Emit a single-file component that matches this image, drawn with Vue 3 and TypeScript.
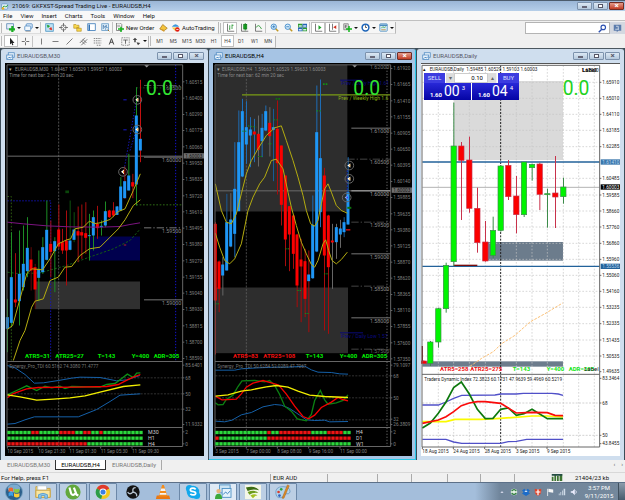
<script setup lang="ts">
type Candle = [x: number, high: number, low: number, top: number, bottom: number, body: string, wick: string]
type Curve = { pts: string; color: string; w?: number; dash?: string }
type Box = { x: number; y: number; w: number; h: number; fill: string }
type Note = { x: number; y: number; t: string; fill: string; size?: number; end?: boolean; bold?: boolean }
type Chart = {
  id: string
  title: string
  theme: 'dark' | 'light'
  active?: boolean
  view: string
  right: number
  split: number
  bodyWidth: number
  boxes: Box[]
  back: Curve[]
  candles: Candle[]
  front: Curve[]
  axis: [number, string][]
  tags: { y: number; t: string; bg: string; fg: string }[]
  notes: Note[]
  dates: [number, string][]
  rows: { y: number; label: string; cells: string }[]
  arrows: [number, number, string][]
}

const B = '#1e96f5'
const R = '#fb0000'
const G = '#1c8c24'
const D = '#a80c0c'
const S = '#666'
const L = '#00f400'
const LG = '#3c8c4a'
const LR = '#c8324b'

const row = (...runs: [string, number][]) => runs.map(([c, n]) => c.repeat(n)).join('')
const axisOf = (start: number, step: number, labels: string[]): [number, string][] =>
  labels.map((t, i) => [Math.round(start + i * step), t])

const atr = (a: string, b: string, color: string, green: string, y: number): Note[] => [
  { x: 75, y, t: `ATR5=${a}`, fill: color, size: 18, bold: true },
  { x: 166, y, t: `ATR25=${b}`, fill: color, size: 18, bold: true },
  { x: 293, y, t: 'T=143', fill: green, size: 18, bold: true },
  { x: 395, y, t: 'Y=400', fill: green, size: 18, bold: true },
  { x: 461, y, t: 'ADR=305', fill: green, size: 18, bold: true },
]

const m30: Chart = {
  id: 'm30', title: 'EURAUDSB,M30', theme: 'dark', view: '15 9 597 1176', right: 548, split: 903, bodyWidth: 9,
  boxes: [
    { x: 268, y: 528, w: 152, h: 72, fill: '#00004e' },
    { x: 105, y: 663, w: 315, h: 83, fill: '#303030' },
  ],
  back: [
    { pts: '22,287 548,287', color: '#6c6c6c', w: 3 },
    { pts: '176,13 176,1160', color: '#777', w: 2, dash: '6 4' },
    { pts: '527,13 527,900', color: '#1414d0', w: 3, dash: '4 5' },
    { pts: '22,421 152,421 152,900', color: '#1414c8', w: 3, dash: '4 5' },
    { pts: '22,408 34,408 34,900', color: '#2c5a10', w: 3, dash: '5 5' },
    { pts: '409,82 548,82', color: '#1d661d', w: 2, dash: '5 5' },
    { pts: '409,433 548,433', color: '#2d6a14', w: 3, dash: '5 5' },
    { pts: '374,318 409,120', color: '#1818c8', w: 3, dash: '4 5' },
    { pts: '390,270 409,207', color: '#1818c8', w: 3, dash: '4 5' },
    { pts: '370,118 380,118', color: '#1818c8', w: 3 },
    { pts: '370,208 380,208', color: '#1818c8', w: 3 },
    { pts: '432,75 548,75', color: '#777', w: 2, dash: '22 6 4 6' },
    { pts: '432,290 548,290', color: '#777', w: 3 },
    { pts: '432,502 548,502', color: '#777', w: 3, dash: '22 6 4 6' },
    { pts: '432,718 548,718', color: '#777', w: 3 },
    { pts: '22,952 548,952', color: '#4c4c4c', w: 2, dash: '6 4' },
    { pts: '22,1000 548,1000', color: '#4c4c4c', w: 2, dash: '6 4' },
    { pts: '22,1046 548,1046', color: '#4c4c4c', w: 2, dash: '6 4' },
    { pts: '196,394 207,394', color: '#0a460a', w: 8 },
    { pts: '22,635 60,640 120,637 200,615 268,590 340,565 390,540 421,505', color: '#145a14', w: 3, dash: '7 5' },
  ],
  candles: [
    [22, 715, 875, 770, 805, B, G], [34, 515, 800, 650, 787, B, G], [46, 578, 740, 717, 726, R, D],
    [58, 510, 795, 640, 722, B, G], [70, 495, 690, 610, 680, B, G], [82, 470, 650, 562, 632, B, G],
    [93, 560, 690, 597, 630, R, '#640808'], [105, 610, 745, 620, 687, R, '#640808'], [116, 570, 722, 625, 652, B, G],
    [128, 530, 640, 560, 635, B, G], [140, 420, 600, 508, 598, B, G], [152, 480, 650, 550, 574, R, D],
    [164, 530, 695, 542, 572, B, G], [176, 432, 565, 507, 558, R, D], [187, 505, 580, 545, 570, R, D],
    [199, 450, 675, 540, 570, R, D], [210, 420, 570, 540, 568, B, '#0e520e'], [222, 455, 545, 507, 538, B, '#0e520e'],
    [234, 438, 605, 512, 525, R, D], [245, 432, 595, 515, 525, R, D], [257, 425, 580, 518, 532, R, D],
    [268, 460, 600, 524, 527, B, G], [280, 450, 570, 470, 525, B, G], [292, 436, 535, 490, 503, R, D],
    [304, 480, 525, 496, 500, B, G], [316, 423, 500, 452, 495, B, G], [328, 448, 472, 450, 470, R, D],
    [340, 425, 470, 450, 465, R, D], [351, 437, 463, 438, 463, B, B], [362, 350, 452, 378, 450, B, G],
    [374, 318, 415, 362, 413, B, D], [386, 280, 390, 345, 390, B, G], [398, 340, 413, 365, 378, R, D],
    [409, 80, 435, 165, 372, B, G], [421, 58, 305, 235, 270, B, '#c41010'],
  ],
  front: [
    { pts: '22,485 70,490 140,496 210,499 300,500 360,498 390,492 420,487', color: '#7c1480', w: 3 },
    { pts: '22,807 38,795 60,715 80,640 95,625 128,628 150,595 175,550 200,538 212,535 225,505 250,500 268,482 285,489 300,487 330,477 355,453 375,445 400,390 421,340', color: '#b4ac10', w: 3 },
    { pts: '40,900 60,840 75,810 95,740 105,722 130,715 150,660 175,650 195,620 215,618 240,585 268,565 300,560 330,530 355,505 375,478 400,435 421,418', color: '#b4ac10', w: 3 },
    { pts: '22,915 45,922 75,942 103,968 130,967 175,960 215,953 240,950 300,951 350,961 380,958 420,945', color: '#1560a8', w: 3 },
    { pts: '22,1091 45,1089 75,1078 103,1069 235,1069 290,1047 330,1023 360,1004 421,1000', color: '#1560a8', w: 3 },
    { pts: '22,1003 50,990 80,976 110,990 135,977 155,982 180,977 195,984 215,978 300,980 320,972 345,969 365,954 382,941 400,951 410,938 421,937', color: '#0d8f16', w: 4 },
    { pts: '22,1012 40,999 80,985 115,981 230,980 320,978 355,972 375,962 400,950 421,942', color: '#f40000', w: 4 },
    { pts: '22,1003 60,1009 110,1019 160,1016 210,1012 255,1006 300,995 370,978 421,973', color: '#f2ee00', w: 4 },
  ],
  axis: [
    ...axisOf(64, 48.8, ['1.60515', '1.60400', '1.60290', '1.60175', '1.60060', '1.59950', '1.59835', '1.59720', '1.59610', '1.59495', '1.59380', '1.59270', '1.59155', '1.59040', '1.58930', '1.58815', '1.58700', '1.58590']),
    [914, '85.6401'], [952, '68'], [1000, '50'], [1046, '32'], [1092, '11.9332'], [1114, '2'], [1150, '0'],
  ],
  tags: [{ y: 286, t: '1.60003', bg: '#6e6e6e', fg: '#111' }],
  notes: [
    { x: 28, y: 31, t: '▾', fill: '#aaa' },
    { x: 45, y: 31, t: 'EURAUDSB,M30  1.60467 1.60529 1.59957 1.60003', fill: '#8a8a8a', size: 14 },
    { x: 28, y: 50, t: 'Time for next bar: 2 min 20 sec', fill: '#8a8a8a', size: 14 },
    { x: 544, y: 88, t: '1.60500', fill: '#777', end: true },
    { x: 544, y: 303, t: '1.60000', fill: '#888', end: true },
    { x: 544, y: 518, t: '1.59500', fill: '#888', end: true },
    { x: 544, y: 734, t: '1.59000', fill: '#888', end: true },
    { x: 438, y: 104, t: '0.0', fill: '#32e632', size: 58 },
    { x: 369, y: 559, t: '=', fill: '#a02020', size: 18 },
    { x: 28, y: 922, t: 'Synergy_Pro_TDI 60.5162 74.3080 71.4777', fill: '#777', size: 14 },
    ...atr('31', '27', '#00ee00', '#00ee00', 893),
  ],
  dates: [[22, '10 Sep 2015'], [115, '10 Sep 21:30'], [208, '11 Sep 01:30'], [302, '11 Sep 05:30'], [396, '11 Sep 09:30']],
  rows: [
    { y: 1116, label: 'M30', cells: row(['g', 6], ['r', 2], ['g', 5], ['r', 4], ['g', 2], ['r', 2], ['g', 2], ['r', 1], ['g', 10]) },
    { y: 1133, label: 'H1', cells: row(['g', 34]) },
    { y: 1150, label: 'H4', cells: row(['r', 20], ['g', 14]) },
  ],
  arrows: [[412, 118, '#fff'], [412, 207, '#fff'], [369, 334, '#fff']],
}

const h4: Chart = {
  id: 'h4', title: 'EURAUDSB,H4', theme: 'dark', active: true, view: '15 9 597 1176', right: 548, split: 903, bodyWidth: 9,
  boxes: [
    { x: 22, y: 13, w: 396, h: 440, fill: '#2d2d2d' },
    { x: 22, y: 681, w: 398, h: 197, fill: '#2d2d2d' },
  ],
  back: [
    { pts: '22,391 548,391', color: '#6c6c6c', w: 3 },
    { pts: '115,55 115,1160', color: '#6a6a6a', w: 2, dash: '6 4' },
    { pts: '537,13 537,1160', color: '#4e4e4e', w: 5, dash: '3 6' },
    { pts: '102,103 548,103', color: '#7a9c14', w: 4 },
    { pts: '396,59 465,59', color: '#0a0a78', w: 3 },
    { pts: '396,817 465,817', color: '#0a0a78', w: 3 },
    { pts: '430,203 548,203', color: '#777', w: 3 },
    { pts: '418,296 548,296', color: '#666', w: 2, dash: '22 6 4 6' },
    { pts: '430,391 548,391', color: '#aaa', w: 3 },
    { pts: '430,485 548,485', color: '#666', w: 2, dash: '22 6 4 6' },
    { pts: '430,580 548,580', color: '#777', w: 3 },
    { pts: '430,677 548,677', color: '#666', w: 2, dash: '22 6 4 6' },
    { pts: '430,772 548,772', color: '#777', w: 3 },
    { pts: '430,866 548,866', color: '#666', w: 2, dash: '22 6 4 6' },
    { pts: '418,330 418,420', color: '#1818c8', w: 4, dash: '4 5' },
    { pts: '22,946 548,946', color: '#4c4c4c', w: 2, dash: '6 4' },
    { pts: '22,1012 548,1012', color: '#4c4c4c', w: 2, dash: '6 4' },
    { pts: '22,1078 548,1078', color: '#4c4c4c', w: 2, dash: '6 4' },
  ],
  candles: [
    [22, 485, 882, 490, 720, R, D], [33, 600, 755, 603, 685, R, D], [44, 590, 705, 612, 645, B, S],
    [56, 400, 630, 485, 630, B, '#1a5a96'], [68, 398, 560, 477, 558, B, S], [80, 245, 590, 385, 520, B, '#1e6cb4'],
    [92, 150, 452, 245, 452, B, '#1e6cb4'], [103, 115, 350, 152, 348, B, '#1e6cb4'], [115, 122, 310, 200, 252, B, '#1e6cb4'],
    [127, 170, 320, 207, 225, B, '#1e6cb4'], [139, 175, 305, 213, 222, R, '#1e6cb4'], [151, 165, 318, 220, 268, R, S],
    [162, 160, 290, 202, 242, B, '#1e6cb4'], [173, 135, 212, 152, 210, B, '#1e6cb4'], [185, 140, 288, 187, 227, R, S],
    [196, 145, 362, 200, 208, B, '#1a5a96'], [208, 120, 402, 205, 308, R, D], [220, 255, 495, 255, 433, R, D],
    [232, 345, 617, 345, 537, R, D], [244, 437, 632, 437, 522, R, D], [256, 465, 625, 465, 580, R, D],
    [267, 520, 740, 522, 675, R, D], [279, 535, 785, 597, 618, R, D], [291, 565, 770, 602, 715, R, D],
    [302, 570, 815, 642, 662, B, D], [314, 405, 655, 493, 653, B, '#1e6cb4'], [326, 75, 575, 215, 573, B, '#1e6cb4'],
    [337, 57, 500, 293, 455, B, '#1e6cb4'], [349, 322, 810, 345, 585, R, D], [361, 463, 820, 465, 620, R, D],
    [373, 490, 685, 540, 546, R, S], [385, 490, 595, 500, 545, B, S], [397, 478, 562, 504, 522, B, S],
    [408, 470, 530, 485, 515, B, '#1a5a96'], [420, 290, 492, 395, 492, B, '#1e6cb4'],
  ],
  front: [
    { pts: '414,508 427,508', color: '#e01010', w: 4 },
    { pts: '22,370 40,450 55,485 70,490 85,460 100,400 115,340 130,300 150,265 175,225 200,202 220,196 235,240 255,300 270,350 285,405 295,450 308,490 320,497 330,480 340,430 350,385 360,370 370,395 385,435 400,450 418,458', color: '#b4ac10', w: 3 },
    { pts: '22,518 35,560 50,600 65,610 80,595 100,550 120,450 135,410 155,370 170,350 190,300 205,296 225,325 240,395 250,440 265,495 280,545 295,580 310,612 320,620 330,600 345,550 353,538 362,570 372,600 385,610 400,597 418,575', color: '#b4ac10', w: 3 },
    { pts: '345,71 358,71', color: '#129012', w: 5, dash: '5 3' },
    { pts: '203,115 218,115', color: '#0d700d', w: 5, dash: '5 3' },
    { pts: '326,151 340,151', color: '#129012', w: 4, dash: '4 4' },
    { pts: '103,212 118,212', color: '#129012', w: 3, dash: '4 4' },
    { pts: '120,196 145,200', color: '#129012', w: 3, dash: '4 4' },
    { pts: '197,178 212,178', color: '#129012', w: 3, dash: '4 4' },
    { pts: '190,250 180,250', color: '#129012', w: 3, dash: '4 4' },
    { pts: '150,288 162,288', color: '#129012', w: 3, dash: '4 4' },
    { pts: '232,565 244,565', color: '#129012', w: 3, dash: '4 3' },
    { pts: '22,730 33,730', color: '#129012', w: 3, dash: '4 3' },
    { pts: '268,690 280,690', color: '#129012', w: 3, dash: '4 3' },
    { pts: '291,759 303,759', color: '#129012', w: 3, dash: '4 3' },
    { pts: '348,640 360,640', color: '#129012', w: 3, dash: '4 3' },
    { pts: '418,442 430,442', color: '#0d700d', w: 6 },
    { pts: '22,929 80,929 100,925 150,922 200,920 240,920 290,917 310,928 330,935 370,936 395,940 420,941', color: '#1560a8', w: 3 },
    { pts: '22,1082 50,1084 72,1079 100,1063 130,1056 165,1039 200,1032 220,1034 245,1044 275,1064 295,1078 320,1080 350,1079 365,1084 420,1083', color: '#1560a8', w: 3 },
    { pts: '22,1027 30,1033 45,1032 55,1017 75,1004 90,978 102,961 140,960 170,964 185,960 200,975 215,1002 230,1037 250,1052 268,1075 295,1081 310,1062 320,1020 337,990 350,1018 360,1031 385,1027 405,1020 420,1003', color: '#0b7f12', w: 4 },
    { pts: '22,1007 42,1018 85,1016 100,1000 115,980 135,968 165,960 190,967 212,974 235,1001 260,1037 285,1068 302,1075 320,1064 340,1041 370,1025 390,1011 405,1017 420,1021', color: '#f40000', w: 4 },
    { pts: '22,1007 60,1003 100,992 130,988 175,979 205,975 240,980 270,992 305,1004 350,1008 420,1011', color: '#f2ee00', w: 4 },
  ],
  axis: [
    ...axisOf(24, 48.4, ['1.61920', '1.61665', '1.61410', '1.61155', '1.60905', '1.60650', '1.60395', '1.60140', '1.59885', '1.59635', '1.59380', '1.59125', '1.58870', '1.58620', '1.58365', '1.58110', '1.57855', '1.57600', '1.57350']),
    [914, '79.1097'], [946, '68'], [1012, '50'], [1076, '32'], [1092, '26.3809'], [1114, '2'], [1150, '0'],
  ],
  tags: [{ y: 389, t: '1.60003', bg: '#6e6e6e', fg: '#111' }],
  notes: [
    { x: 28, y: 31, t: '▾', fill: '#aaa' },
    { x: 42, y: 31, t: 'EURAUDSB,H4  1.59663 1.60529 1.59633 1.60003', fill: '#8a8a8a', size: 14 },
    { x: 28, y: 50, t: 'Time for next bar: 62 min 20 sec', fill: '#8a8a8a', size: 14 },
    { x: 544, y: 25, t: '1.62000', fill: '#777', end: true },
    { x: 400, y: 73, t: 'Prev / Daily High 1.61', fill: '#0a0a80', size: 15 },
    { x: 391, y: 118, t: 'Prev / Weekly High 1.6', fill: '#8cb414', size: 15 },
    { x: 544, y: 217, t: '1.61000', fill: '#888', end: true },
    { x: 544, y: 311, t: '1.60500', fill: '#888', end: true },
    { x: 544, y: 406, t: '1.60000', fill: '#999', end: true },
    { x: 544, y: 500, t: '1.59500', fill: '#888', end: true },
    { x: 544, y: 596, t: '1.59000', fill: '#888', end: true },
    { x: 544, y: 691, t: '1.58500', fill: '#888', end: true },
    { x: 544, y: 786, t: '1.58000', fill: '#888', end: true },
    { x: 544, y: 878, t: '1.57500', fill: '#666', end: true },
    { x: 399, y: 833, t: 'Prev / Daily Low 1.57', fill: '#0a0a80', size: 15 },
    { x: 436, y: 104, t: '0.0', fill: '#32e632', size: 58 },
    { x: 28, y: 922, t: 'Synergy_Pro_TDI 50.6284 52.0289 47.7067', fill: '#777', size: 14 },
    ...atr('83', '108', '#f41010', '#00ee00', 893),
  ],
  dates: [[22, '3 Sep 2015'], [115, '7 Sep 00:00'], [208, '8 Sep 08:00'], [302, '9 Sep 16:00'], [396, '11 Sep 00:00']],
  rows: [
    { y: 1116, label: 'H4', cells: row(['g', 13], ['r', 1], ['g', 2], ['r', 8], ['g', 4], ['r', 4], ['g', 2]) },
    { y: 1133, label: 'D1', cells: row(['r', 1], ['g', 12], ['r', 21]) },
    { y: 1150, label: 'W1', cells: row(['g', 34]) },
  ],
  arrows: [[424, 315, '#fff'], [424, 355, '#fff'], [416, 411, '#8cb4ff']],
}

const gridY = [64, 112, 160, 208, 257, 352, 402, 450, 498, 547, 595, 643, 691, 739, 788, 837, 885]
const gridX = [70, 116, 163, 211, 304, 351, 397, 445, 491, 538]

const daily: Chart = {
  id: 'daily', title: 'EURAUDSB,Daily', theme: 'light', view: '18 9 597 1176', right: 554, split: 940, bodyWidth: 16,
  boxes: [
    { x: 116, y: 60, w: 328, h: 237, fill: '#dadada' },
    { x: 211, y: 543, w: 233, h: 56, fill: '#6c7c8c' },
    { x: 22, y: 901, w: 422, h: 16, fill: '#6c7c8c' },
  ],
  back: [
    ...gridY.map((y) => ({ pts: `22,${y} 554,${y}`, color: '#c4c4c4', w: 2, dash: '5 5' })),
    ...gridX.map((x) => ({ pts: `${x},13 ${x},1158`, color: '#c4c4c4', w: 2, dash: '5 5' })),
    { pts: '257,13 257,1158', color: '#222', w: 3, dash: '6 4' },
    { pts: '22,379 554,379', color: '#b4b4b4', w: 3 },
    { pts: '22,303 554,303', color: '#22629a', w: 4 },
    { pts: '22,616 554,616', color: '#22629a', w: 4 },
    { pts: '116,613 187,613', color: '#780c0c', w: 4 },
    { pts: '165,916 200,892 235,872 260,848 300,823 345,783 390,758 443,726', color: '#fcc074', w: 3, dash: '8 4' },
    { pts: '22,855 22,900', color: '#780c0c', w: 4 },
    { pts: '22,1026 554,1026', color: '#bbb', w: 2, dash: '6 4' },
    { pts: '22,1123 554,1123', color: '#bbb', w: 2, dash: '6 4' },
  ],
  candles: [
    [26, 898, 908, 900, 908, R, LR], [46, 840, 915, 843, 907, L, LG], [70, 740, 860, 743, 843, L, LG],
    [93, 605, 755, 613, 743, L, LG], [116, 125, 615, 255, 602, L, LG], [139, 243, 477, 255, 298, R, LR],
    [163, 227, 455, 297, 442, R, LR], [187, 380, 575, 442, 545, R, LR], [211, 480, 602, 543, 600, R, LR],
    [234, 467, 592, 508, 583, L, LG], [257, 312, 512, 315, 508, L, LG], [280, 297, 417, 313, 407, R, LR],
    [304, 345, 517, 405, 461, R, LR], [327, 303, 468, 303, 461, L, LG], [351, 308, 359, 310, 320, L, LG],
    [374, 305, 447, 309, 400, R, LR], [397, 383, 500, 398, 401, L, LG], [421, 285, 501, 396, 408, R, LR],
    [445, 350, 428, 378, 407, L, LG],
  ],
  front: [
    { pts: '22,1032 70,1032 93,1023 116,1012 140,1003 240,1002 257,999 304,999 325,997 410,997 430,999 444,1003', color: '#5050c8', w: 4 },
    { pts: '22,1135 93,1135 116,1143 140,1147 257,1147 280,1142 304,1141 335,1135 444,1135', color: '#5050c8', w: 4 },
    { pts: '22,1082 93,1082 120,1075 200,1075 257,1072 300,1069 351,1065 397,1065 444,1068', color: '#fafa00', w: 5 },
    { pts: '22,1101 46,1086 70,1057 93,1023 116,980 139,963 163,999 187,1045 211,1073 234,1072 257,1045 280,1041 304,1063 327,1058 351,1045 397,1073 444,1073', color: '#0c780c', w: 5 },
    { pts: '22,1087 70,1077 93,1067 116,1052 139,1034 163,1026 187,1022 211,1022 257,1027 304,1056 351,1054 397,1055 420,1063 444,1064', color: '#fa0a0a', w: 5 },
  ],
  axis: [
    [64, '1.65910'], [112, '1.65010'], [160, '1.64110'], [208, '1.63185'], [257, '1.62285'], [352, '1.60485'],
    [402, '1.59585'], [450, '1.58660'], [498, '1.57760'], [547, '1.56860'], [595, '1.55960'], [643, '1.55060'],
    [691, '1.54160'], [739, '1.53235'], [788, '1.52335'], [837, '1.51435'], [885, '1.50535'], [932, '1.49635'],
    [952, '83.3464'], [1026, '68'], [1123, '50'], [1148, '43.8455'],
  ],
  tags: [
    { y: 303, t: '1.61410', bg: '#3c78ac', fg: '#b8d4ec' },
    { y: 378, t: '1.60003', bg: '#000', fg: '#fff' },
    { y: 616, t: '1.55536', bg: '#22629a', fg: '#b8d4ec' },
  ],
  notes: [
    { x: 25, y: 31, t: '▴', fill: '#111' },
    { x: 44, y: 31, t: 'EURAUDSB,Daily  1.59485 1.60529 1.59103 1.60003', fill: '#222', size: 14 },
    { x: 501, y: 33, t: 'Label', fill: '#111', size: 18, bold: true },
    { x: 551, y: 33, t: '1.67000', fill: '#111', size: 14, end: true },
    { x: 443, y: 103, t: '0.0', fill: '#1ed21e', size: 58 },
    ...atr('258', '275', '#ee1010', '#14e614', 930),
    { x: 551, y: 931, t: 'Label', fill: '#222', end: true, size: 18 },
    { x: 28, y: 959, t: 'Traders Dynamic Index 72.3823 60.1731 47.9639 59.4969 60.5219', fill: '#222', size: 14 },
  ],
  dates: [[22, '18 Aug 2015'], [115, '24 Aug 2015'], [209, '28 Aug 2015'], [303, '3 Sep 2015'], [396, '9 Sep 2015']],
  rows: [],
  arrows: [],
}

const charts: Chart[] = [m30, h4, daily]
const menus = ['File', 'View', 'Insert', 'Charts', 'Tools', 'Window', 'Help']
const frames = ['M1', 'M5', 'M15', 'M30', 'H1', 'H4', 'D1', 'W1', 'MN']
const tabs = ['EURAUDSB,M30', 'EURAUDSB,H4', 'EURAUDSB,Daily']
const drawTools = ['vline', 'hline', 'trend', 'channel', 'fibo', 'text', 'label']
const drawNames = ['Vertical line', 'Horizontal line', 'Trendline', 'Channel', 'Fibonacci', 'Text', 'Text label']
const apps = [
  { id: 'explorer', name: 'Explorer', open: true },
  { id: 'torrent', name: 'uTorrent', open: true },
  { id: 'chrome', name: 'Chrome', open: true },
  { id: 'obs', name: 'OBS', open: false },
  { id: 'vlc', name: 'VLC', open: false },
  { id: 'skype', name: 'Skype', open: true },
  { id: 'terminal', name: 'Terminal', open: true, current: true },
  { id: 'wave', name: 'Stream', open: true },
  { id: 'paint', name: 'Paint', open: true },
]
const tray = ['up', 'sync', 'dropbox', 'shield', 'flag', 'signal', 'volume']
</script>

<template>
  <div class="desktop">
    <svg class="sprites" aria-hidden="true">
      <symbol id="i-app" viewBox="0 0 12 12"><rect x="1" y="2" width="9" height="8" rx="1" fill="#e8f2fa" stroke="#4c88bc" /><path d="M2 8l3-3 2 2 3-3" stroke="#1ca028" stroke-width="1.5" fill="none" /><circle cx="3" cy="9" r="2" fill="#f0b020" /></symbol>
      <symbol id="i-doc" viewBox="0 0 12 12"><rect x="3" y="1" width="8" height="6" fill="#eaf4fc" stroke="#4a86c0" /><rect x="1" y="4" width="8" height="6" fill="#eaf4fc" stroke="#4a86c0" /><path d="M2 9l2-2 2 1 2-2" stroke="#2a70b8" fill="none" /></symbol>
      <symbol id="i-new" viewBox="0 0 12 12"><rect x="1" y="1" width="9" height="7" fill="#e6f0fa" stroke="#5080b0" /><path d="M7 4h3v3h2v3h-2v2H7v-2H4V7h3z" fill="#1cae24" /></symbol>
      <symbol id="i-profiles" viewBox="0 0 12 12"><rect x="3" y="1" width="8" height="6" rx="1" fill="#d8e8f8" stroke="#4a86c0" /><rect x="1" y="4" width="8" height="6" rx="1" fill="#f0f7fd" stroke="#4a86c0" /><path d="M2 11h7" stroke="#888" /></symbol>
      <symbol id="i-market" viewBox="0 0 12 12"><rect x="1" y="1" width="10" height="10" fill="#bfe2f4" stroke="#3c8cc0" /><path d="M3 3l3 1-2 2z" fill="#1ca028" stroke="#1ca028" /><path d="M9 9L6 8l2-2z" fill="#e02818" stroke="#e02818" /></symbol>
      <symbol id="i-data" viewBox="0 0 12 12"><circle cx="6" cy="6" r="3.5" fill="none" stroke="#666" /><path d="M6 0v5M6 7v5M0 6h5M7 6h5" stroke="#555" /></symbol>
      <symbol id="i-nav" viewBox="0 0 12 12"><path d="M1 2h3l1 1h3v4H1zM5 6h2l1 1h3v4H5z" fill="#f8d84c" stroke="#b48c1c" stroke-width=".8" /></symbol>
      <symbol id="i-term" viewBox="0 0 12 12"><rect x="1" y="1" width="10" height="9" fill="#fff" stroke="#2c70b4" /><path d="M2 2h2v8H2z" fill="#2c70b4" /></symbol>
      <symbol id="i-tester" viewBox="0 0 12 12"><rect x="1" y="1" width="9" height="9" fill="#dcecf8" stroke="#5c94c4" /><path d="M3 8V3l2 3 2-3v4" stroke="#3c70a4" fill="none" /><circle cx="8" cy="8" r="2" fill="#fff" stroke="#5c94c4" /><path d="M9 9l2 2" stroke="#8c6c2c" stroke-width="1.3" /></symbol>
      <symbol id="i-order" viewBox="0 0 12 12"><path d="M2 0h5l2 2v8H2z" fill="#fff" stroke="#666" /><path d="M3 3h4M3 5h4" stroke="#888" /><path d="M7 5h2v2h3v2H9v3H7V9H4V7h3z" fill="#12b41a" /></symbol>
      <symbol id="i-meta" viewBox="0 0 12 12"><path d="M1 8l4-6 6 5-4 3z" fill="#f4c43c" stroke="#a8781c" /><path d="M1 8l6 2v2z" fill="#d89820" /></symbol>
      <symbol id="i-auto" viewBox="0 0 12 12"><path d="M1 5q5-7 10 0z" fill="#3c98dc" /><path d="M1 6h9l-4 5z" fill="#f4cc4c" /><circle cx="8.500" cy="8.500" r="3" fill="#e01c14" /><path d="M7 8h3v1H7z" fill="#fff" /></symbol>
      <symbol id="i-bars" viewBox="0 0 12 12"><path d="M2 1v10h9" stroke="#555" fill="none" /><path d="M5 3v6M4 8h1M8 2v6M8 3h2" stroke="#128c1c" fill="none" /></symbol>
      <symbol id="i-candles" viewBox="0 0 12 12"><path d="M2 1v10h9" stroke="#555" fill="none" /><rect x="5" y="2" width="4" height="6" fill="#1cb428" stroke="#0c7814" /><path d="M7 0v10" stroke="#0c7814" /></symbol>
      <symbol id="i-line" viewBox="0 0 12 12"><path d="M2 1v10h9" stroke="#555" fill="none" /><path d="M3 6q3-6 7 2" stroke="#128c1c" fill="none" /></symbol>
      <symbol id="i-zin" viewBox="0 0 12 12"><path d="M7 7l4 4" stroke="#c09824" stroke-width="2" /><circle cx="5" cy="5" r="3.600" fill="#d4ebfa" stroke="#2878c0" /><path d="M3 5h4M5 3v4" stroke="#2070b8" /></symbol>
      <symbol id="i-zout" viewBox="0 0 12 12"><path d="M7 7l4 4" stroke="#c09824" stroke-width="2" /><circle cx="5" cy="5" r="3.600" fill="#d4ebfa" stroke="#2878c0" /><path d="M3 5h4" stroke="#2070b8" /></symbol>
      <symbol id="i-tile" viewBox="0 0 12 12"><path d="M0 1h6v5H0zM6 6h6v5H6z" fill="#2c9c28" /><path d="M6 1h6v5H6zM0 6h6v5H0z" fill="#2464b8" /><path d="M1 3h4v2H1zM7 3h4v2H7zM1 8h4v2H1zM7 8h4v2H7z" fill="#d4e8f4" /></symbol>
      <symbol id="i-scroll" viewBox="0 0 12 12"><path d="M2 1v10h9" stroke="#555" fill="none" /><path d="M6 3l4 3-4 3z" fill="#1ca428" /></symbol>
      <symbol id="i-shift" viewBox="0 0 12 12"><path d="M2 1v10h9M6 1v8" stroke="#555" fill="none" /><path d="M11 3L7 5.500 11 8z" fill="#d03020" /></symbol>
      <symbol id="i-indi" viewBox="0 0 12 12"><path d="M1 1h6v8H1z" fill="#e4e4e4" stroke="#777" /><path d="M3 7V3h2M3 5h2" stroke="#555" fill="none" /><path d="M7 4h2v3h3v2H9v3H7V9H4V7h3z" fill="#12b41a" /></symbol>
      <symbol id="i-clock" viewBox="0 0 12 12"><circle cx="6" cy="6" r="4.500" fill="#fff" stroke="#1c64b8" stroke-width="2" /><path d="M6 3v3h2" stroke="#333" fill="none" /></symbol>
      <symbol id="i-templ" viewBox="0 0 12 12"><rect x="1" y="1" width="10" height="10" rx="1" fill="#d8ecf8" stroke="#4c8cc0" /><path d="M1 3h10" stroke="#4c8cc0" stroke-width="2" /><path d="M3 7l2-2 2 1 2-1" stroke="#2c9c38" fill="none" /><path d="M3 9h6" stroke="#c0882c" /></symbol>
      <symbol id="i-cursor" viewBox="0 0 12 12"><path d="M4 1v9l2-2 1 3 1.500-.5L7.500 8H10z" fill="#222" /></symbol>
      <symbol id="i-cross" viewBox="0 0 12 12"><path d="M6 1v4M6 7v4M1 6h4M7 6h4" stroke="#444" /></symbol>
      <symbol id="i-vline" viewBox="0 0 12 12"><path d="M6 2v8" stroke="#555" /></symbol>
      <symbol id="i-hline" viewBox="0 0 12 12"><path d="M2 6h8" stroke="#555" /></symbol>
      <symbol id="i-trend" viewBox="0 0 12 12"><path d="M2 10l8-8" stroke="#555" /></symbol>
      <symbol id="i-channel" viewBox="0 0 12 12"><path d="M1 8l7-7M3 11l8-8M3 5l5 5M5 3l5 5" stroke="#555" /></symbol>
      <symbol id="i-fibo" viewBox="0 0 12 12"><path d="M1 2h10M1 5h10M1 8h10M5 11h6" stroke="#666" stroke-dasharray="2 1" /></symbol>
      <symbol id="i-text" viewBox="0 0 12 12"><path d="M3 10l3-8 3 8M4 7h4" stroke="#444" stroke-width="1.300" fill="none" /></symbol>
      <symbol id="i-label" viewBox="0 0 12 12"><rect x="1" y="1" width="10" height="10" fill="none" stroke="#777" stroke-dasharray="2 1" /><path d="M3 4h6M6 4v5" stroke="#444" /></symbol>
      <symbol id="i-arrows" viewBox="0 0 12 12"><path d="M1 4l3-3 3 3H5v3H3V4zM6 7l5 1-3 3z" fill="#444" /></symbol>
      <symbol id="i-search" viewBox="0 0 12 12"><circle cx="7" cy="4.500" r="3" fill="none" stroke="#2c50b0" stroke-width="1.500" /><path d="M5 7l-4 4" stroke="#2c50b0" stroke-width="2" /></symbol>
      <symbol id="i-chat" viewBox="0 0 12 12"><path d="M1 1h10v8H7l-2 2V9H1z" fill="#5c7cac" /><path d="M4 3h3v4M3 7h5" stroke="#e4ecf4" fill="none" /></symbol>
      <symbol id="i-explorer" viewBox="0 0 20 18"><path d="M2 3h6l1 2h9v10H2z" fill="#f4d878" stroke="#c8a040" /><path d="M4 2h10v5H4z" fill="#fff" stroke="#b8c8d4" /><path d="M2 7h16v8H2z" fill="#f9e6a0" stroke="#c8a040" /><path d="M5 16v-4q5-3 10 0v4h-3v-3H8v3z" fill="#8cc8ec" stroke="#5c9cc8" /></symbol>
      <symbol id="i-torrent" viewBox="0 0 20 18"><circle cx="10" cy="9" r="8.500" fill="#62a83c" /><path d="M6 4l2 7q2 3 5-1M11 4l3 8 2 1" stroke="#fff" stroke-width="2.400" fill="none" /></symbol>
      <symbol id="i-chrome" viewBox="0 0 20 18"><circle cx="10" cy="9" r="8" fill="#f4c81c" /><path d="M10 9L3 5a8 8 0 0 1 14 0z" fill="#e03a2c" /><path d="M10 9L3 5a8 8 0 0 0 5 12z" fill="#2c9c48" /><circle cx="10" cy="9" r="3.800" fill="#fff" /><circle cx="10" cy="9" r="2.900" fill="#3c80e4" /></symbol>
      <symbol id="i-obs" viewBox="0 0 20 18"><circle cx="10" cy="9" r="7.500" fill="#141414" /><path d="M10 9q-1-5 3-5M10 9q5 1 4 5M10 9q-4 4-6 0" stroke="#b8c4d0" stroke-width="1.500" fill="none" /></symbol>
      <symbol id="i-vlc" viewBox="0 0 20 18"><path d="M3 13h14l1 4H2z" fill="#e87814" /><path d="M9 1h2l4 13H5z" fill="#f48c1c" /><path d="M8 5h4l1 3H7zM6.500 10h7l.6 2H6z" fill="#f4f4f4" /></symbol>
      <symbol id="i-skype" viewBox="0 0 20 18"><circle cx="10" cy="9" r="7" fill="#12a8ec" /><circle cx="6" cy="5" r="4" fill="#12a8ec" /><circle cx="14" cy="13" r="4" fill="#12a8ec" /><path d="M13 6q-2-2-5-1-2 2 0 3l4 1q2 2 0 3-3 1-5-1" stroke="#fff" stroke-width="2" fill="none" /></symbol>
      <symbol id="i-terminal" viewBox="0 0 20 18"><rect x="6" y="1" width="12" height="9" fill="#cce4f4" stroke="#4c90c4" /><rect x="9" y="5" width="10" height="10" fill="#e4f2fc" stroke="#4c90c4" /><path d="M10 12l3-3 2 2 3-3" stroke="#2c78b8" fill="none" /><circle cx="5" cy="8" r="2.500" fill="#e8b47c" /><path d="M1 17q0-6 4-6t4 6z" fill="#3ca83c" /></symbol>
      <symbol id="i-wave" viewBox="0 0 20 18"><rect x="1" y="1" width="18" height="16" fill="#f4f6e8" /><path d="M2 4q10-3 15 3-8-2-13 1z" fill="#3c6c14" /><path d="M4 9q8-3 12 1-6-1-10 2z" fill="#6c9c1c" /><path d="M7 13q5-3 8 0-3 0-5 3z" fill="#a4c020" /></symbol>
      <symbol id="i-paint" viewBox="0 0 20 18"><path d="M2 11q-1-8 8-8 8 0 8 6-1 3-5 2-2 0-2 3-8 4-9-3z" fill="#b4d4ec" stroke="#6c9cc4" /><circle cx="5" cy="9" r="1.500" fill="#d83c2c" /><circle cx="8" cy="6" r="1.500" fill="#34a03c" /><circle cx="6" cy="13" r="1.500" fill="#3060c0" /><path d="M9 16l6-15 2 1-6 14z" fill="#e08c24" stroke="#a8641c" stroke-width=".6" /></symbol>
      <symbol id="i-up" viewBox="0 0 10 10"><path d="M3 6l2-2 2 2z" fill="#eef" /></symbol>
      <symbol id="i-sync" viewBox="0 0 10 10"><circle cx="5" cy="5" r="4" fill="#e4f0e4" /><path d="M2 4q3-4 6 0M8 6q-3 4-6 0" stroke="#287838" stroke-width="1.500" fill="none" /></symbol>
      <symbol id="i-dropbox" viewBox="0 0 10 10"><path d="M0 3l3-2 2 2 2-2 3 2-2 2 2 2-5 3-5-3 2-2z" fill="#1c6cc8" /><path d="M3 4l2 1 2-1-2-1z" fill="#fff" /></symbol>
      <symbol id="i-shield" viewBox="0 0 10 10"><path d="M1 1l4 1 4-1v4q0 3-4 5-4-2-4-5z" fill="#e04428" /><path d="M5 2v7M2 5h6" stroke="#fff" stroke-width="1.500" /></symbol>
      <symbol id="i-flag" viewBox="0 0 10 10"><path d="M2 1v9" stroke="#f4f4f4" /><path d="M3 1l6 1v4L3 5z" fill="#f4f4f4" /></symbol>
      <symbol id="i-signal" viewBox="0 0 10 10"><path d="M1 9V7h1v2zM3 9V5h1v4zM5 9V3h1v6zM7 9V1h2v8z" fill="#d0dce8" /></symbol>
      <symbol id="i-volume" viewBox="0 0 10 10"><path d="M1 4h2l3-3v8L3 6H1z" fill="#eef" /><path d="M7 3q2 2 0 4" stroke="#eef" fill="none" /></symbol>
    </svg>

    <header class="titlebar">
      <svg class="ico"><use href="#i-app" /></svg>
      <h1>21069: GKFXST-Spread Trading Live - EURAUDSB,H4</h1>
      <div class="winbtns">
        <button aria-label="Minimize"><i class="min"></i></button>
        <button aria-label="Restore"><i class="max"></i></button>
        <button class="close" aria-label="Close">×</button>
      </div>
    </header>

    <nav class="menubar"><button v-for="m in menus" :key="m">{{ m }}</button></nav>

    <div class="toolbars">
      <div class="toolbar">
        <div class="group">
          <i class="grip"></i>
          <button class="drop" aria-label="New chart"><svg class="ico"><use href="#i-new" /></svg></button>
          <button class="drop" aria-label="Profiles"><svg class="ico"><use href="#i-profiles" /></svg></button>
          <i class="sep"></i>
          <button v-for="t in ['market', 'data', 'nav', 'term', 'tester']" :key="t" class="tool" :aria-label="t"><svg class="ico"><use :href="'#i-' + t" /></svg></button>
          <i class="sep"></i>
          <button class="wide order"><svg class="ico"><use href="#i-order" /></svg>New Order</button>
          <button class="tool" aria-label="MetaEditor"><svg class="ico"><use href="#i-meta" /></svg></button>
          <button class="wide auto"><svg class="ico"><use href="#i-auto" /></svg>AutoTrading</button>
        </div>
        <div class="group">
          <i class="grip"></i>
          <button class="tool on" aria-label="Bar chart"><svg class="ico"><use href="#i-bars" /></svg></button>
          <button class="tool" aria-label="Candlesticks"><svg class="ico"><use href="#i-candles" /></svg></button>
          <button class="tool" aria-label="Line chart"><svg class="ico"><use href="#i-line" /></svg></button>
          <i class="sep"></i>
          <button class="tool" aria-label="Zoom in"><svg class="ico"><use href="#i-zin" /></svg></button>
          <button class="tool" aria-label="Zoom out"><svg class="ico"><use href="#i-zout" /></svg></button>
          <button class="tool" aria-label="Tile windows"><svg class="ico"><use href="#i-tile" /></svg></button>
          <i class="sep"></i>
          <button class="tool on" aria-label="Auto scroll"><svg class="ico"><use href="#i-scroll" /></svg></button>
          <button class="tool on" aria-label="Chart shift"><svg class="ico"><use href="#i-shift" /></svg></button>
          <i class="sep"></i>
          <button class="drop" aria-label="Indicators"><svg class="ico"><use href="#i-indi" /></svg></button>
          <button class="drop" aria-label="Periods"><svg class="ico"><use href="#i-clock" /></svg></button>
          <button class="drop" aria-label="Templates"><svg class="ico"><use href="#i-templ" /></svg></button>
        </div>
        <label class="search"><input type="text" aria-label="Search" /><svg class="ico"><use href="#i-search" /></svg></label>
        <button class="chat" aria-label="Messages"><svg class="ico"><use href="#i-chat" /></svg></button>
      </div>
      <div class="toolbar">
        <div class="group">
          <i class="grip"></i>
          <button class="tool on" aria-label="Cursor"><svg class="ico"><use href="#i-cursor" /></svg></button>
          <button class="tool" aria-label="Crosshair"><svg class="ico"><use href="#i-cross" /></svg></button>
          <i class="sep"></i>
          <button v-for="(t, i) in drawTools" :key="t" class="tool" :aria-label="drawNames[i]"><svg class="ico"><use :href="'#i-' + t" /></svg></button>
          <button class="drop narrow" aria-label="Arrows"><svg class="ico"><use href="#i-arrows" /></svg></button>
        </div>
        <div class="group">
          <i class="grip"></i>
          <div class="frames"><button v-for="f in frames" :key="f" :class="{ on: f === 'H4' }">{{ f }}</button></div>
        </div>
      </div>
    </div>

    <main class="workspace">
      <section v-for="c in charts" :key="c.id" class="window" :class="{ active: c.active }">
        <header>
          <svg class="ico"><use href="#i-doc" /></svg>
          <h2>{{ c.title }}</h2>
          <div class="winbtns">
            <button aria-label="Minimize"><i class="min"></i></button>
            <button aria-label="Maximize"><i class="max"></i></button>
            <button :class="{ close: c.active }" aria-label="Close">×</button>
          </div>
        </header>
        <div class="plot" :class="c.theme">
          <svg :viewBox="c.view" role="img" :aria-label="c.title">
            <rect v-for="(b, i) in c.boxes" :key="i" :x="b.x" :y="b.y" :width="b.w" :height="b.h" :fill="b.fill" />
            <polyline v-for="(l, i) in c.back" :key="'b' + i" :points="l.pts" :stroke="l.color" :stroke-width="l.w" :stroke-dasharray="l.dash" fill="none" />
            <g v-for="k in c.candles" :key="k[0]">
              <rect :x="k[0] - 1" :y="k[1]" width="3" :height="k[2] - k[1]" :fill="k[6]" />
              <rect :x="k[0] - c.bodyWidth / 2" :y="k[3]" :width="c.bodyWidth" :height="k[4] - k[3]" :fill="k[5]" :stroke="c.theme === 'light' ? k[6] : 'none'" stroke-width="2" />
            </g>
            <polyline v-for="(l, i) in c.front" :key="'f' + i" :points="l.pts" :stroke="l.color" :stroke-width="l.w" :stroke-dasharray="l.dash" fill="none" />
            <g class="edge">
              <path :d="`M21 13H${c.right}M21 13V1158M${c.right} 13V1158M21 ${c.split}H${c.right}M21 1158H${c.right}`" />
              <path v-if="c.rows.length" :d="`M21 1101H${c.right}`" />
              <path v-for="a in c.axis" :key="a[0]" :d="`M${c.right} ${a[0]}h5`" />
              <path v-for="d in c.dates" :key="d[0]" :d="`M${d[0]} 1158v6`" />
            </g>
            <g v-for="r in c.rows" :key="r.y">
              <rect v-for="(s, i) in r.cells" :key="i" :x="22 + i * 12" :y="r.y - 5" width="10" height="10" :fill="s === 'g' ? '#2cd83c' : '#ee1414'" />
              <text x="444" :y="r.y + 5" fill="#ccc" font-size="16">{{ r.label }}</text>
            </g>
            <text v-for="a in c.axis" :key="'a' + a[0]" class="scale" :x="c.right + 8" :y="a[0] + 5">{{ a[1] }}</text>
            <text v-for="d in c.dates" :key="'d' + d[0]" class="scale" :x="d[0]" y="1176">{{ d[1] }}</text>
            <g v-for="g in c.tags" :key="g.y">
              <rect :x="c.right + 3" :y="g.y - 8" width="61" height="16" :fill="g.bg" />
              <text :x="c.right + 8" :y="g.y + 5" :fill="g.fg" font-size="14">{{ g.t }}</text>
            </g>
            <path v-if="c.theme === 'dark'" d="M433 14h14l-7 7z" fill="#999" />
            <g v-for="a in c.arrows" :key="a[1]">
              <circle :cx="a[0]" :cy="a[1]" r="13" fill="none" stroke="#666" stroke-width="3" />
              <path :d="`M${a[0] - 6} ${a[1]}l9-7v14z`" :fill="a[2]" />
              <path :d="`M${a[0]} ${a[1] - 3}h3v6h-3z`" :fill="a[2] === '#fff' ? '#f0a020' : '#1414e0'" />
            </g>
            <text v-for="(n, i) in c.notes" :key="'n' + i" :x="n.x" :y="n.y" :fill="n.fill" :font-size="n.size ?? 16" :text-anchor="n.end ? 'end' : 'start'" :font-weight="n.bold ? 700 : 400">{{ n.t }}</text>
          </svg>
          <form v-if="c.id === 'daily'" class="ticket" @submit.prevent>
            <button class="side" type="button">SELL</button>
            <div class="lots">
              <button type="button" aria-label="Less">▾</button>
              <input type="text" value="0.10" aria-label="Lots" />
              <button type="button" aria-label="More">▴</button>
            </div>
            <button class="side" type="button">BUY</button>
            <output class="quote"><small>1.60</small><b>00</b><sup>3</sup></output>
            <output class="quote"><small>1.60</small><b>04</b><sup>4</sup></output>
          </form>
        </div>
      </section>
    </main>

    <nav class="tabs">
      <a v-for="t in tabs" :key="t" href="#" :class="{ on: t === 'EURAUDSB,H4' }">{{ t }}</a>
      <span class="pager">‹<span>›</span></span>
    </nav>

    <footer class="status">
      <span class="help">For Help, press F1</span>
      <span class="symbol">EUR AUD</span>
      <span class="cell"></span><span class="cell"></span><span class="cell"></span><span class="cell"></span><span class="cell"></span>
      <span class="traffic">
        <svg viewBox="0 0 12 8"><path d="M0 3h2v5H0zM3 1h2v7H3zM6 2h2v6H6zM9 0h3v8H9z" fill="#3c7430" /><path d="M0 0h12v2H0z" fill="#244c44" /></svg>
        21404/23 kb
      </span>
    </footer>

    <div class="taskbar">
      <button class="start" aria-label="Start">
        <svg viewBox="0 0 20 20">
          <circle cx="10" cy="10" r="9.500" fill="#2c608c" stroke="#7ca4c4" />
          <ellipse cx="10" cy="6" rx="7" ry="4.500" fill="#7cacd0" />
          <path d="M4 6q3-2 5 0v4q-2-2-5 0z" fill="#f06830" /><path d="M10 6q3 2 6 0v4q-3 2-6 0z" fill="#8cc83c" />
          <path d="M4 11q3-2 5 0v4q-2-2-5 0z" fill="#3ca0e8" /><path d="M10 11q3 2 6 0v4q-3 2-6 0z" fill="#fccc34" />
        </svg>
      </button>
      <button v-for="a in apps" :key="a.id" class="task" :class="{ open: a.open, current: a.current }" :aria-label="a.name"><svg><use :href="'#i-' + a.id" /></svg></button>
      <div class="tray">
        <svg v-for="t in tray" :key="t"><use :href="'#i-' + t" /></svg>
        <time>3:57 PM<br />9/11/2015</time>
        <button class="peek" aria-label="Show desktop"></button>
      </div>
    </div>
  </div>
</template>

<style>
body {
  margin: 0;
}
</style>

<style scoped>
* {
  box-sizing: border-box;
}
.desktop {
  display: flex;
  flex-direction: column;
  min-height: 100vh;
  background: #f0f0f0;
  color: #111;
  font: 6px/8px Roboto, 'Liberation Sans', sans-serif;
}
button {
  margin: 0;
  padding: 0;
  border: 0;
  background: none;
  color: inherit;
  font: inherit;
}
.sprites {
  display: none;
}
.ico {
  width: 9px;
  height: 9px;
  flex: none;
}
.titlebar {
  display: flex;
  align-items: center;
  gap: 3px;
  height: 11px;
  padding: 0 1px 0 1px;
  border-top: 1px solid #4c5c6c;
  background: linear-gradient(#9ab6d6, #b6cfe9);
}
.titlebar .ico {
  width: 8px;
}
h1,
h2 {
  flex: 1;
  margin: 0;
  font-size: 6px;
  font-weight: 400;
  line-height: 8px;
  white-space: nowrap;
}
.winbtns {
  display: flex;
  gap: 1px;
}
.winbtns button {
  display: flex;
  align-items: center;
  justify-content: center;
  width: 15px;
  height: 8px;
  border: 1px solid #7c92ac;
  border-radius: 1px;
  background: linear-gradient(#dce8f4, #b4c8dc);
  color: #556;
  font-size: 8px;
  font-weight: 700;
  line-height: 6px;
}
.winbtns .close {
  border-color: #702c24;
  background: linear-gradient(#e49c8c, #c23c24);
  color: #fff;
}
.min {
  width: 5px;
  height: 2px;
  margin-top: 2px;
  border: 1px solid #667;
  background: #fff;
}
.max {
  width: 5px;
  height: 4px;
  border: 1px solid #556;
  background: #fff;
}
.menubar {
  display: flex;
  gap: 8px;
  height: 9px;
  padding-left: 3px;
  background: #f8f8f8;
  white-space: nowrap;
}
.toolbars {
  display: flex;
  flex-direction: column;
  gap: 1px;
  height: 28px;
  padding-top: 1px;
  border-top: 1px solid #c0c0c0;
}
.toolbar {
  display: flex;
  height: 13px;
}
.group {
  display: flex;
  align-items: center;
  height: 12px;
  border-right: 1px solid #b8b8b8;
  border-bottom: 1px solid #ddd;
  background: #f6f6f6;
}
.grip {
  width: 1px;
  height: 10px;
  margin: 0 2px 0 1px;
  background: #bbb;
}
.sep {
  width: 1px;
  height: 11px;
  margin: 0 1px 0 0;
  background: #c4c4c4;
}
.tool {
  display: flex;
  align-items: center;
  justify-content: center;
  width: 14px;
  height: 12px;
}
.on {
  border: 1px solid #c0c0c0;
  background: #fff;
}
.drop {
  display: flex;
  align-items: center;
  gap: 1px;
  width: 18px;
  height: 12px;
  padding-left: 2px;
}
.drop.narrow {
  width: 16px;
  padding-left: 0;
}
.drop::after {
  content: '';
  margin-left: 1px;
  border: 2px solid transparent;
  border-top-color: #111;
  border-bottom-width: 0;
}
.wide {
  display: flex;
  align-items: center;
  gap: 2px;
  padding-left: 1px;
  white-space: nowrap;
}
.order {
  width: 42px;
}
.auto {
  width: 48px;
}
.search {
  display: flex;
  align-items: center;
  width: 85px;
  height: 12px;
  margin-left: auto;
  padding-right: 2px;
  border: 1px solid #b4b4b4;
  background: #fff;
}
.search input {
  flex: 1;
  min-width: 0;
  height: 8px;
  padding: 0 2px;
  border: 0;
  background: none;
  font-size: 6px;
}
.chat {
  display: flex;
  align-items: center;
  justify-content: center;
  width: 15px;
  height: 12px;
  background: #d4d8e0;
}
.frames {
  display: grid;
  grid-template-columns: repeat(9, 1fr);
  width: 122px;
  height: 12px;
  color: #444;
  font-size: 5px;
}
.workspace {
  display: grid;
  flex: 1;
  grid-template-columns: repeat(3, 1fr);
  gap: 1px;
  padding: 0 1px;
  background: #3c4c58;
}
.window {
  display: flex;
  flex-direction: column;
  padding: 0 4px 4px;
  border-top: 1px solid #4c5860;
  border-radius: 3px 3px 0 0;
  background: #cfdeee;
}
.window.active {
  background: #a6c4e4;
  box-shadow: inset -1px -1px #28c8e8;
}
.window:last-child .plot {
  border-top: 1px solid #555;
}
.window header {
  display: flex;
  align-items: center;
  gap: 2px;
  height: 14px;
  padding-left: 1px;
  color: #556;
}
.window.active header {
  color: #000;
}
.plot {
  position: relative;
  flex: 1;
}
.plot > svg {
  display: block;
  width: 100%;
  height: 100%;
}
.plot text {
  white-space: pre;
}
.dark {
  background: #000;
}
.light {
  background: #fff;
}
.scale {
  font-size: 14px;
}
.dark .scale {
  fill: #808080;
}
.light .scale {
  fill: #222;
}
.edge {
  fill: none;
  stroke: #666;
  stroke-width: 3;
}
.ticket {
  position: absolute;
  top: 9px;
  left: 3px;
  display: grid;
  grid-template-columns: 21px 25px 25px 21px;
  grid-template-rows: 10px 17px;
  gap: 0 1px;
  width: 95px;
  background: #fff;
}
.side {
  background: #3c3ce0;
  color: #dce0ff;
}
.lots {
  display: flex;
  grid-column: span 2;
  background: #f0f0f0;
}
.lots button {
  width: 8px;
  background: #dcdcdc;
  color: #666;
}
.lots input {
  width: 34px;
  padding: 0 4px;
  border: 1px solid #ccc;
  background: #fff;
  font: inherit;
  text-align: right;
}
.quote {
  display: flex;
  grid-column: span 2;
  align-items: flex-end;
  justify-content: center;
  gap: 2px;
  padding-bottom: 2px;
  background: linear-gradient(#2828d8, #0404a4);
  color: #fff;
}
.quote small {
  font-size: 6px;
  font-weight: 700;
  line-height: 6px;
}
.quote b {
  font-size: 14px;
  font-weight: 400;
  line-height: 13px;
}
.quote sup {
  align-self: flex-start;
  font-size: 6px;
  line-height: 10px;
}
.tabs {
  display: flex;
  height: 12px;
  padding-left: 1px;
  background: #f0f0f0;
}
.tabs a {
  height: 10px;
  padding: 1px 5px 0 6px;
  color: #777;
  text-decoration: none;
  white-space: nowrap;
}
.tabs a:nth-child(3) {
  border-right: 1px solid #aaa;
}
.tabs .on {
  padding: 1px 5px 0;
  border: 1px solid #333;
  border-top: 0;
  background: #fff;
  color: #000;
}
.pager {
  display: flex;
  gap: 6px;
  margin-left: auto;
  padding-right: 2px;
  color: #555;
}
.status {
  display: grid;
  grid-template-columns: 270px 57px 50px 34px 36px 33px 34px 34px 1fr;
  align-items: center;
  height: 10px;
  border-top: 1px solid #d8d8d8;
}
.status > span {
  height: 8px;
  padding-left: 2px;
  border-left: 1px solid #aaa;
  white-space: nowrap;
}
.status .help {
  padding-left: 1px;
  border: 0;
}
.status .traffic {
  display: flex;
  grid-column: 8 / -1;
  justify-content: space-between;
  padding-right: 16px;
}
.traffic svg {
  width: 12px;
  height: 7px;
  margin-left: 34px;
}
.taskbar {
  display: flex;
  align-items: center;
  gap: 2px;
  height: 19px;
  background: linear-gradient(90deg, #a4bedb 0%, #a4bedb 76%, #70859b 80%, #74889c 100%);
  border-top: 1px solid #5c7088;
}
.start {
  width: 27px;
  height: 18px;
}
.start svg {
  display: block;
  width: 18px;
  height: 18px;
  margin: 0 auto;
}
.task {
  display: flex;
  align-items: center;
  justify-content: center;
  width: 28px;
  height: 18px;
  border: 1px solid transparent;
}
.task svg {
  width: 18px;
  height: 16px;
}
.open {
  border-color: #6c88a8;
  border-radius: 1px;
  background: #bccfe4;
}
.current {
  background: #dfeaf5;
}
.tray {
  display: flex;
  align-items: center;
  gap: 4px;
  height: 18px;
  margin-left: auto;
  color: #fff;
  text-align: center;
}
.tray svg {
  width: 8px;
  height: 8px;
}
.tray time {
  width: 30px;
  margin-left: 2px;
}
.peek {
  width: 7px;
  height: 18px;
  border-left: 1px solid #40505e;
  background: linear-gradient(#8c9cac, #44586a);
}
</style>
